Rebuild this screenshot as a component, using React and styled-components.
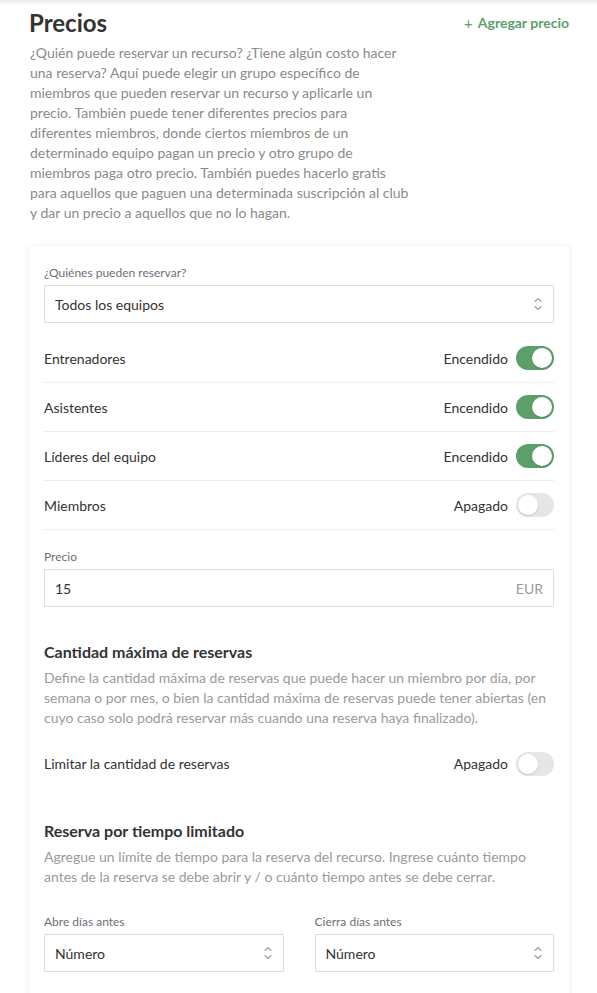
import React from "react";
import styled, { createGlobalStyle } from "styled-components";

const Global = createGlobalStyle`
  html, body { margin: 0; padding: 0; background: #fff; }
  body { font-family: Lato, "Open Sans", Arial, sans-serif; color: #333; -webkit-font-smoothing: antialiased; }
  * { box-sizing: border-box; }
`;

const GREEN = "#5c9f6b";

const Page = styled.div`
  min-height: 993px;
  padding: 8px 28px 0 29px;
  box-shadow: inset 0 6px 6px -6px rgba(0, 0, 0, 0.18);
`;

const Header = styled.div`
  display: flex;
  justify-content: space-between;
  align-items: flex-start;
`;

const Title = styled.h1`
  margin: 0;
  font-size: 24px;
  line-height: 30px;
  font-weight: 700;
  color: #333;
`;

const AddLink = styled.a`
  font-size: 14px;
  line-height: 30px;
  font-weight: 700;
  color: ${GREEN};
  text-decoration: none;
  display: flex;
  gap: 5px;
  align-items: center;
  span { font-weight: 400; font-size: 15px; }
`;

const Intro = styled.p`
  margin: 5px 0 0 1px;
  max-width: 382px;
  font-size: 14px;
  line-height: 20px;
  color: #8a8a8a;
`;

const Card = styled.section`
  margin-top: 23px;
  background: #fff;
  border-radius: 4px;
  box-shadow: 0 1px 8px rgba(0, 0, 0, 0.08);
  padding: 19px 15px 40px 15px;
`;

const FieldLabel = styled.label`
  display: block;
  font-size: 12px;
  line-height: 16px;
  color: #6b7078;
  margin-bottom: 4px;
`;

const Box = styled.div`
  height: 38px;
  border: 1px solid #dcdcdc;
  border-radius: 1px;
  display: flex;
  align-items: center;
  justify-content: space-between;
  padding: 0 10px 0 10px;
  font-size: 14px;
  color: #333;
  background: #fff;
`;

const Suffix = styled.span`
  color: #9a9a9a;
`;

const Rows = styled.div`
  margin-top: 11px;
`;

const Row = styled.div`
  height: 49px;
  display: flex;
  align-items: center;
  justify-content: space-between;
  border-bottom: ${(p) => (p.$plain ? "none" : "1px solid #eee")};
  font-size: 14px;
  color: #333;
`;

const ToggleWrap = styled.div`
  display: flex;
  align-items: center;
  gap: 8px;
`;

const Track = styled.span`
  width: 38px;
  height: 24px;
  border-radius: 12px;
  background: ${(p) => (p.$on ? GREEN : "#e6e6e6")};
  display: flex;
  align-items: center;
  justify-content: ${(p) => (p.$on ? "flex-end" : "flex-start")};
  padding: 2px;
`;

const Knob = styled.span`
  width: 20px;
  height: 20px;
  border-radius: 50%;
  background: #fff;
  box-shadow: 0 1px 2px rgba(0, 0, 0, 0.15);
`;

const Field = styled.div`
  margin-top: ${(p) => p.$mt || 0}px;
`;

const SectionTitle = styled.h2`
  margin: ${(p) => p.$mt}px 0 0;
  font-size: 16px;
  line-height: 20px;
  font-weight: 700;
  color: #333;
`;

const SectionText = styled.p`
  margin: 6px 0 0;
  font-size: 14px;
  line-height: 20px;
  color: #9a9a9a;
`;

const Grid = styled.div`
  display: grid;
  grid-template-columns: 1fr 1fr;
  column-gap: 31px;
  margin-top: 27px;
`;

const Chevrons = () => (
  <svg width="10" height="18" viewBox="0 0 10 18" fill="none" stroke="#a0a0a0" strokeWidth="1.1" strokeLinecap="round" strokeLinejoin="round">
    <path d="M2 6.5 L5 3.5 L8 6.5" />
    <path d="M2 11.5 L5 14.5 L8 11.5" />
  </svg>
);

const Toggle = ({ on }) => (
  <ToggleWrap>
    <span>{on ? "Encendido" : "Apagado"}</span>
    <Track $on={on}>
      <Knob />
    </Track>
  </ToggleWrap>
);

const Select = ({ value }) => (
  <Box>
    <span>{value}</span>
    <Chevrons />
  </Box>
);

const groups = [
  { name: "Entrenadores", on: true },
  { name: "Asistentes", on: true },
  { name: "Líderes del equipo", on: true },
  { name: "Miembros", on: false },
];

export default function App() {
  return (
    <>
      <Global />
      <Page>
        <Header>
          <Title>Precios</Title>
          <AddLink href="#">
            <span>+</span>Agregar precio
          </AddLink>
        </Header>
        <Intro>
          ¿Quién puede reservar un recurso? ¿Tiene algún costo hacer una reserva? Aquí puede elegir un grupo específico de miembros que pueden reservar un recurso y aplicarle un precio. También puede tener diferentes precios para diferentes miembros, donde ciertos miembros de un determinado equipo pagan un precio y otro grupo de miembros paga otro precio. También puedes hacerlo gratis para aquellos que paguen una determinada suscripción al club y dar un precio a aquellos que no lo hagan.
        </Intro>
        <Card>
          <Field>
            <FieldLabel>¿Quiénes pueden reservar?</FieldLabel>
            <Select value="Todos los equipos" />
          </Field>
          <Rows>
            {groups.map((g) => (
              <Row key={g.name}>
                <span>{g.name}</span>
                <Toggle on={g.on} />
              </Row>
            ))}
          </Rows>
          <Field $mt={19}>
            <FieldLabel>Precio</FieldLabel>
            <Box>
              <span>15</span>
              <Suffix>EUR</Suffix>
            </Box>
          </Field>
          <SectionTitle $mt={35}>Cantidad máxima de reservas</SectionTitle>
          <SectionText>
            Define la cantidad máxima de reservas que puede hacer un miembro por día, por semana o por mes, o bien la cantidad máxima de reservas puede tener abiertas (en cuyo caso solo podrá reservar más cuando una reserva haya finalizado).
          </SectionText>
          <Rows>
            <Row $plain>
              <span>Limitar la cantidad de reservas</span>
              <Toggle on={false} />
            </Row>
          </Rows>
          <SectionTitle $mt={33}>Reserva por tiempo limitado</SectionTitle>
          <SectionText>
            Agregue un límite de tiempo para la reserva del recurso. Ingrese cuánto tiempo antes de la reserva se debe abrir y / o cuánto tiempo antes se debe cerrar.
          </SectionText>
          <Grid>
            <Field>
              <FieldLabel>Abre días antes</FieldLabel>
              <Select value="Número" />
            </Field>
            <Field>
              <FieldLabel>Cierra días antes</FieldLabel>
              <Select value="Número" />
            </Field>
          </Grid>
        </Card>
      </Page>
    </>
  );
}
